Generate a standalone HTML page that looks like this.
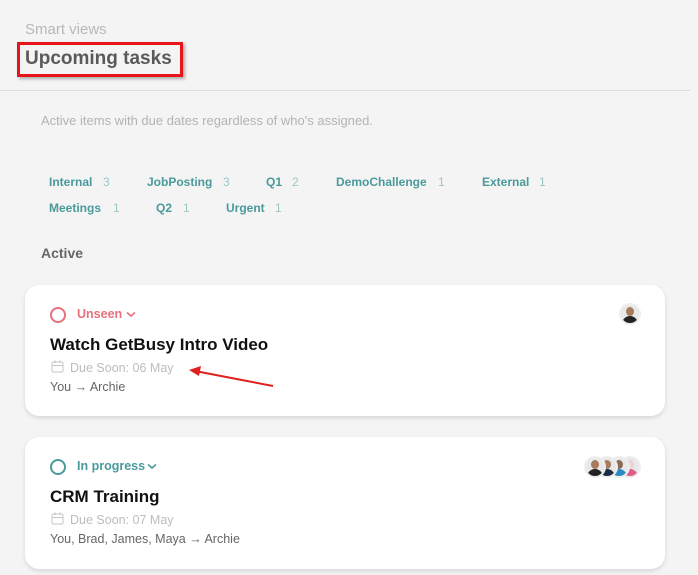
<!DOCTYPE html>
<html><head><meta charset="utf-8"><style>
*{margin:0;padding:0;box-sizing:border-box}
body{width:698px;height:575px;background:#f4f4f4;font-family:"Liberation Sans",sans-serif;position:relative;overflow:hidden}
.a{position:absolute;white-space:nowrap}
.tag{font-size:12px;font-weight:bold;color:#4a9a9c}
.cnt{font-size:12px;color:#9cc6c7}
.card{position:absolute;left:25px;width:640px;background:#fff;border-radius:14px;box-shadow:0 2px 5px rgba(0,0,0,.12)}
.av{position:absolute;width:22px;height:22px;border-radius:50%;border:2px solid #eee;overflow:hidden;background:#e8e8e8}
.av i{position:absolute;left:5px;top:2px;width:8px;height:9px;border-radius:50%;background:#a87a5e}
.av b{position:absolute;left:1px;top:11px;width:16px;height:10px;border-radius:8px 8px 0 0;background:#222}
</style></head><body>
<div class="a" style="left:25px;top:21px;font-size:15px;color:#b8b8b8">Smart views</div>
<div class="a" style="left:17px;top:42px;width:166px;height:35px;border:3px solid #e8141a;box-shadow:2px 2px 3px rgba(0,0,0,.3)"></div>
<div class="a" style="left:25px;top:48px;font-size:19px;font-weight:bold;color:#5a5a5a">Upcoming tasks</div>
<div class="a" style="left:0;top:90px;width:690px;height:1px;background:#dcdcdc"></div>
<div class="a" style="left:41px;top:113px;font-size:13px;color:#b3b3b3">Active items with due dates regardless of who's assigned.</div>

<div class="a tag" style="left:49px;top:175px">Internal</div><div class="a cnt" style="left:103px;top:175px">3</div>
<div class="a tag" style="left:147px;top:175px">JobPosting</div><div class="a cnt" style="left:223px;top:175px">3</div>
<div class="a tag" style="left:266px;top:175px">Q1</div><div class="a cnt" style="left:292px;top:175px">2</div>
<div class="a tag" style="left:336px;top:175px">DemoChallenge</div><div class="a cnt" style="left:438px;top:175px">1</div>
<div class="a tag" style="left:482px;top:175px">External</div><div class="a cnt" style="left:539px;top:175px">1</div>
<div class="a tag" style="left:49px;top:201px">Meetings</div><div class="a cnt" style="left:113px;top:201px">1</div>
<div class="a tag" style="left:156px;top:201px">Q2</div><div class="a cnt" style="left:183px;top:201px">1</div>
<div class="a tag" style="left:226px;top:201px">Urgent</div><div class="a cnt" style="left:275px;top:201px">1</div>

<div class="a" style="left:41px;top:245px;font-size:14px;font-weight:bold;color:#666">Active</div>

<div class="card" style="top:285px;height:131px">
 <div class="a" style="left:25px;top:22px;width:16px;height:16px;border:2px solid #e8707c;border-radius:50%"></div>
 <div class="a" style="left:52px;top:22px;font-size:12.5px;font-weight:bold;color:#e8707c">Unseen</div>
 <svg class="a" style="left:101px;top:26px" width="10" height="7"><polyline points="1,1.5 5,5 9,1.5" fill="none" stroke="#e8707c" stroke-width="1.6"/></svg>
 <div class="a" style="left:25px;top:50px;font-size:17px;font-weight:bold;color:#111">Watch GetBusy Intro Video</div>
 <svg class="a" style="left:26px;top:75px" width="13" height="13" viewBox="0 0 13 13"><rect x="1" y="2" width="11" height="10" rx="1.5" fill="none" stroke="#c4c4c4"/><line x1="1" y1="5.5" x2="12" y2="5.5" stroke="#c4c4c4"/><line x1="4" y1="0.5" x2="4" y2="3" stroke="#c4c4c4"/><line x1="9" y1="0.5" x2="9" y2="3" stroke="#c4c4c4"/></svg>
 <div class="a" style="left:45px;top:76px;font-size:12.5px;color:#bdbdbd">Due Soon: 06 May</div>
 <div class="a" style="left:25px;top:95px;font-size:12.5px;color:#666">You &#8594; Archie</div>
 <div class="av" style="left:594px;top:18px"><i></i><b></b></div>
</div>
<svg class="a" style="left:185px;top:362px" width="92" height="28"><line x1="88" y1="24" x2="10" y2="9" stroke="#e0201c" stroke-width="2"/><polygon points="4,8 16,4 14,14" fill="#e0201c"/></svg>

<div class="card" style="top:437px;height:132px">
 <div class="a" style="left:25px;top:22px;width:16px;height:16px;border:2px solid #4a9a9c;border-radius:50%"></div>
 <div class="a" style="left:52px;top:22px;font-size:12.5px;font-weight:bold;color:#4a9a9c">In progress</div>
 <svg class="a" style="left:122px;top:26px" width="10" height="7"><polyline points="1,1.5 5,5 9,1.5" fill="none" stroke="#4a9a9c" stroke-width="1.6"/></svg>
 <div class="a" style="left:25px;top:50px;font-size:17px;font-weight:bold;color:#111">CRM Training</div>
 <svg class="a" style="left:26px;top:75px" width="13" height="13" viewBox="0 0 13 13"><rect x="1" y="2" width="11" height="10" rx="1.5" fill="none" stroke="#c4c4c4"/><line x1="1" y1="5.5" x2="12" y2="5.5" stroke="#c4c4c4"/><line x1="4" y1="0.5" x2="4" y2="3" stroke="#c4c4c4"/><line x1="9" y1="0.5" x2="9" y2="3" stroke="#c4c4c4"/></svg>
 <div class="a" style="left:45px;top:76px;font-size:12.5px;color:#bdbdbd">Due Soon: 07 May</div>
 <div class="a" style="left:25px;top:95px;font-size:12.5px;color:#666">You, Brad, James, Maya &#8594; Archie</div>
 <div class="av" style="left:594px;top:19px;z-index:1"><i style="background:#e6d5cf"></i><b style="background:#e05b86"></b></div>
 <div class="av" style="left:583px;top:19px;z-index:2"><i style="background:#8a6a55"></i><b style="background:#2a8ac4"></b></div>
 <div class="av" style="left:571px;top:19px;z-index:3"><i></i><b style="background:#1f2a44"></b></div>
 <div class="av" style="left:559px;top:19px;z-index:4"><i></i><b></b></div>
</div>
</body></html>
